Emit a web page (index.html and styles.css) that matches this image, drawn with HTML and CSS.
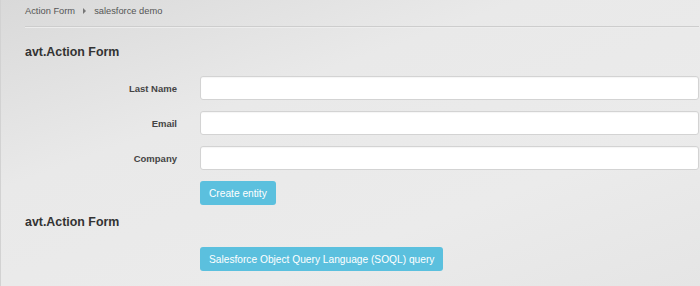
FILE: index.html
```html
<!DOCTYPE html>
<html lang="en">

<head>
    <meta charset="UTF-8">
    <title>Action Form - salesforce demo</title>
    <link rel="stylesheet" href="styles.css">
</head>

<body>
    <div class="page">
        <div class="crumbs">
            <a href="#">Action Form</a>
            <span class="caret"></span>
            <span>salesforce demo</span>
        </div>

        <h2 class="form-title">avt.Action Form</h2>
        <form class="action-form">
            <label for="lastName">Last Name</label>
            <input type="text" id="lastName">
            <label for="email">Email</label>
            <input type="text" id="email">
            <label for="company">Company</label>
            <input type="text" id="company">
            <div class="actions">
                <button type="button" class="btn">Create entity</button>
            </div>
        </form>

        <h2 class="form-title second">avt.Action Form</h2>
        <form class="action-form query">
            <div class="actions">
                <button type="button" class="btn">Salesforce Object Query Language (SOQL) query</button>
            </div>
        </form>
    </div>
</body>

</html>
```

FILE: styles.css
```css
html,
body {
    height: 100%;
}

body {
    margin: 0;
    font-family: "Liberation Sans", Arial, sans-serif;
    color: #333;
    background: linear-gradient(160deg, #d9d9d9 0%, #e9e9e9 35%, #ebebeb 70%, #e5e5e5 100%);
    border-left: 1px solid #d2d2d2;
    box-sizing: border-box;
}

.page {
    padding: 0 1px 0 24px;
}

.crumbs {
    height: 22px;
    line-height: 22px;
    padding-bottom: 4px;
    font-size: 9.3px;
    color: #555;
    border-bottom: 1px solid #cdcdcd;
    box-shadow: 0 1px 0 #ededed;
    display: flex;
    align-items: center;
    gap: 6px;
}

.crumbs a {
    color: #555;
    text-decoration: none;
}

.caret {
    width: 0;
    height: 0;
    border-top: 3px solid transparent;
    border-bottom: 3px solid transparent;
    border-left: 3px solid #777;
    margin: 0 2px;
}

.form-title {
    margin: 17px 0 0;
    font-size: 12.4px;
    line-height: 16px;
    font-weight: bold;
    color: #333;
}

.form-title.second {
    margin-top: 9px;
}

.action-form {
    margin-top: 16px;
    display: grid;
    grid-template-columns: 152px 1fr;
    column-gap: 23px;
    row-gap: 11px;
    align-items: center;
}

.action-form.query {
    margin-top: 17px;
}

.action-form label {
    text-align: right;
    font-size: 9.5px;
    font-weight: bold;
    color: #444;
}

.action-form input {
    height: 24px;
    box-sizing: border-box;
    border: 1px solid #d3d3d3;
    border-radius: 3px;
    background: #fff;
    box-shadow: inset 0 1px 1px rgba(0, 0, 0, 0.04);
    padding: 0 6px;
    font-size: 10px;
}

.actions {
    grid-column: 2;
}

.btn {
    height: 24px;
    padding: 0 9px;
    border: none;
    border-radius: 3px;
    background-color: #5bc0de;
    color: #fff;
    font-family: "Liberation Sans", Arial, sans-serif;
    font-size: 10.2px;
    cursor: pointer;
}

.btn:hover {
    background-color: #46b8da;
}
```
